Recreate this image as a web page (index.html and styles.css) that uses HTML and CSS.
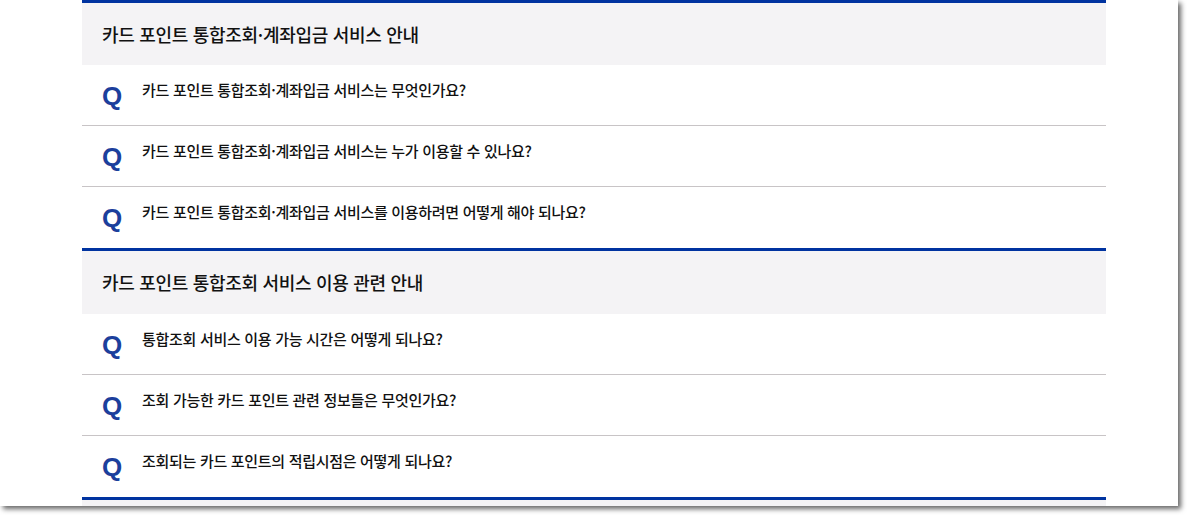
FILE: index.html
```html
<!DOCTYPE html>
<html lang="ko">
<head>
<meta charset="utf-8">
<title>FAQ</title>
<link rel="stylesheet" href="styles.css">
</head>
<body>
<div class="frame">
  <div class="column">
    <section class="faq">
      <h2 class="faq-title">카드 포인트 통합조회·계좌입금 서비스 안내</h2>
      <ul class="faq-list">
        <li class="faq-item"><span class="q">Q</span><span class="question">카드 포인트 통합조회·계좌입금 서비스는 무엇인가요?</span></li>
        <li class="faq-item"><span class="q">Q</span><span class="question">카드 포인트 통합조회·계좌입금 서비스는 누가 이용할 수 있나요?</span></li>
        <li class="faq-item"><span class="q">Q</span><span class="question">카드 포인트 통합조회·계좌입금 서비스를 이용하려면 어떻게 해야 되나요?</span></li>
      </ul>
    </section>
    <section class="faq">
      <h2 class="faq-title">카드 포인트 통합조회 서비스 이용 관련 안내</h2>
      <ul class="faq-list">
        <li class="faq-item"><span class="q">Q</span><span class="question">통합조회 서비스 이용 가능 시간은 어떻게 되나요?</span></li>
        <li class="faq-item"><span class="q">Q</span><span class="question">조회 가능한 카드 포인트 관련 정보들은 무엇인가요?</span></li>
        <li class="faq-item"><span class="q">Q</span><span class="question">조회되는 카드 포인트의 적립시점은 어떻게 되나요?</span></li>
      </ul>
    </section>
    <section class="faq">
      <h2 class="faq-title">&nbsp;</h2>
    </section>
  </div>
</div>
</body>
</html>
```

FILE: styles.css
```css
* { box-sizing: border-box; }
html, body { margin: 0; padding: 0; background: #ffffff; }
body {
  font-family: "Noto Sans CJK KR", "Noto Sans", sans-serif;
  color: #111111;
  min-height: 515px;
  padding-bottom: 9px;
}

.frame {
  width: 1178px;
  height: 506px;
  background: #ffffff;
  overflow: hidden;
  box-shadow: 3px 3px 5px rgba(0, 0, 0, 0.6);
}

.column {
  width: 1024px;
  margin-left: 82px;
}

.faq {
  border-top: 3px solid #0033a0;
}

.faq-title {
  margin: 0;
  height: 62px;
  padding-left: 20px;
  padding-bottom: 1px;
  display: flex;
  align-items: center;
  background: #f4f3f5;
  font-size: 18px;
  font-weight: 500;
  letter-spacing: -0.3px;
  color: #111111;
}

.faq + .faq .faq-title {
  height: 63px;
}

.faq-list {
  list-style: none;
  margin: 0;
  padding: 0;
}

.faq-item {
  height: 61px;
  display: flex;
  align-items: center;
  padding-left: 20px;
  border-bottom: 1px solid #c8c4c6;
}

.faq-item:last-child {
  height: 61px;
  border-bottom: none;
}

.q {
  width: 40px;
  font-family: "Liberation Sans", Arial, sans-serif;
  font-weight: bold;
  font-size: 26px;
  color: #1c3f9c;
  padding-top: 2px;
}

.question {
  font-size: 15px;
  font-weight: 500;
  letter-spacing: -0.3px;
  color: #111111;
  padding-bottom: 12px;
}
```
